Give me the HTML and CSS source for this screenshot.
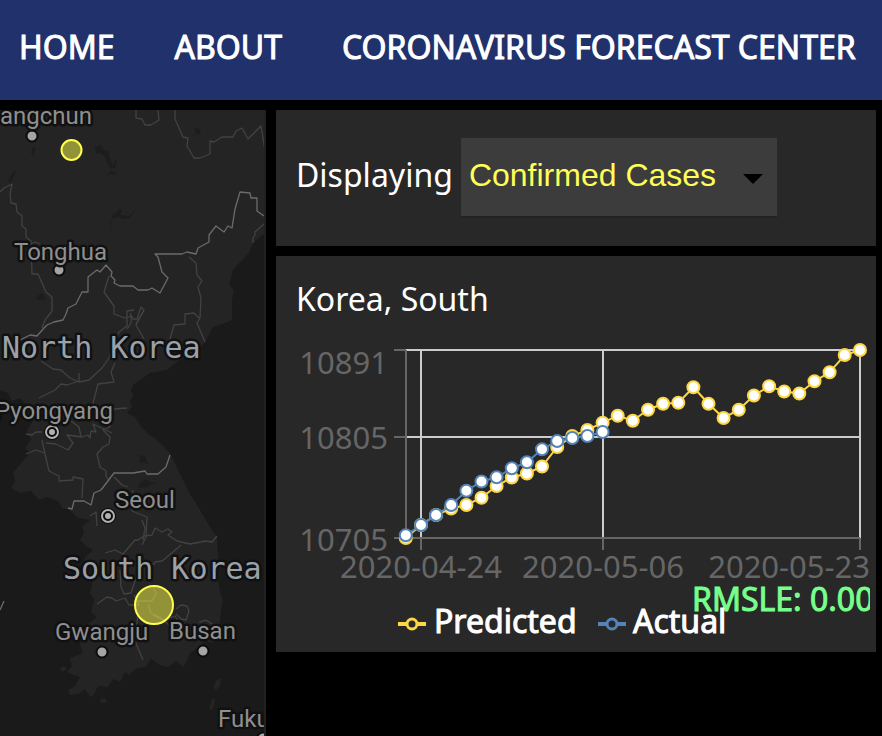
FILE: index.html
```html
<!DOCTYPE html>
<html lang="en">
<head>
<meta charset="utf-8">
<title>Coronavirus Forecast Center</title>
<link rel="stylesheet" href="styles.css">
</head>
<body>
<nav class="nav">
  <a href="#home">HOME</a>
  <a href="#about">ABOUT</a>
  <a href="#forecast">CORONAVIRUS FORECAST CENTER</a>
</nav>
<main class="layout">
  <section class="map" aria-label="Map">
    <svg class="map-canvas" role="img" aria-label="Map of the Korean peninsula">
      <g transform="translate(0 -110)">
        <path class="land" d="M0 110H264V234L260 237 253 243 249 253 241 261 233 270 229 285 234 290 232 300V320L225 323 213 327 205 342 198 350 187 357 178 361 167 370 150 373 133 385 131 391 134 395 130 400 132 407 127 413 135 417 140 425 148 434 155 438 170 453 176 466 183 480 190 494 200 510 210 527 217 537 218 558 217 570 218 580 220 592 223 600 221 611 220 620 219 630 213 643 205 641 199 647 190 653 187 661 183 667 176 661 168 667 160 665 151 659 146 667 137 668 129 675 125 672 120 682 113 679 108 687 98 686 94 695 90 697 85 689 79 694 70 695 68 690 75 686 80 677 74 675 67 672 72 666 70 658 83 653 80 645 83 633 88 624 97 617 91 612 94 600 90 593 93 580 88 575 97 567 83 563 86 556 93 550 86 546 80 540 84 533 82 526 90 520 78 518 70 510 62 508 58 501 47 497 39 500 31 491 20 493 11 488 15 481 13 473 22 462 30 453 25 448 31 440 27 430 33 421 38 410 28 407 20 398 12 401 8 393 0 390Z"/>
        <path class="land" d="M217 680l4-2-1 8-4 4-3-3zM212 698l3 2-2 9-4 1zM60 668l4-2 3 3-5 3zM100 699l5-1 2 4-6 1z"/>
        <path class="water" d="M95 147l6-2 3 5 5 1 0 5 4 9 5-8-3 11-4 1-4-6-2-6-5-4-4 1zM107 177l3-6 7 1-2 3-5-1zM111 233v-11l2-3-2-4 5-2 4-5 2 3-2 4 9 1 6-6-5 8-6 1-5-2-7 2-2 4zM192 138l4-6-2-5 7 3-2 5-3-2zM8 181l3-6 5-5-3 9-3 4zM31 153l2-6 3 1-3 8zM36 297l6-4 4 7-9 0zM139 455l6 1 3 8-5-2-4 1 1-6zM138 484l8-5 5 4 5-1-9 5-8 1z"/>
        <g class="district">
          <path d="M136 110l0 8 6 1 3 6h6l8-5-1-10"/>
          <path d="M175 110v9l8 18 5 1-1 8 7 12h6l10-4v-13l4 1 8-5h11l3-6 6-3 6 11 13-13 4 25"/>
          <path d="M0 192l4-4 8-4-2 10 1 9 5 1 1 8 5 4v10l4 3v8l5 4 1 33 6 0 8 18 6 5v14l-7 9-3 8"/>
          <path d="M31 244l4-2 5 2M109 276l-5 16 10 14v8l11 4 6-2 0 7-4 6M130 313l3 6h4l4-12 3 3-8 14"/>
          <path d="M189 257l7 6 1 12 5 6-4 6 3 11-1 20-3 5 8 19M199 318l-5-5-9 1v10l-11 1-5 17-6 5"/>
          <path d="M264 224l-9 8 0 3-2 3v5"/>
          <path d="M134 310l-7 1v15l-8 6-8 18-2 8-7 10-13 12-10 2-9-4-9-8-8-1-12-8M79 373v8l-12 4-6-1-6 6-16 8"/>
          <path d="M144 310l-8 15 8 14M115 363l-4 9 3 10-16 2-5 19 8 7M127 408l-13 1-4 6v12l-7 3 7 7-1 7-6 3-6 7 3 13 6 4v5l3 5"/>
          <path d="M26 434l6 1 4-3 6 0M42 440l3 14 4 17 10 5v5l14-1 0-3 10 2-1 19M26 454l10-4 9 3M46 443l10 1 12 6 5-7-6-8 15 2 6-2 2 3 1-7 5 1-3-8 19 9"/>
          <path d="M71 421l8 6 2 10M114 477l8 8 6 2M133 490l-1 21 15 6-1 20-4 8M142 520l3 8-2 12"/>
          <path d="M105 553l10-3 8 4 12-14h3l6-4 8-1 3-7 7 4 6-3 4 3-4 3 9 6 13 3 11-2 4-1 7 1 5-6M181 545l-8 7-11 9-7 1-1 2h-5M120 570l1 17 3 7 7-1 5-15"/>
          <path d="M97 604l10-7 5 1 4 3 9-3 4 7h10l-5-10M153 586l3 8-4 7h-15M148 605l3 8 10 5 9 8 8-5-3-5-12 4-10-5M138 613l-3 28 8 19M176 609l5-4 6 1 2 5-3 9-5-1-5-5M199 622l7-2 9 6M90 516l6-4 1 14"/>
        </g>
        <g class="border">
          <path d="M20 340l10-5 7 1 7-8 3-3 7-3 9-2 3-6 2-6 8-4 6-12h6l0-15 9-7 3 2 6-7 6 7-1 4 4 4-1 3 6 3h13l5 4h10l4-2 8 5 8-15-6-6-4-15-3-3h27l5-2 9 2 2-6 11-6v-7l7-9 8 6 4-6 4 2 3-19 5-17 10 1 1 5h6v13l7 5"/>
          <path d="M68 508l4 1 2-8h10l7 4 3-12 7-3 13-17h19l12-2 2 3h11l8-7 4-12"/>
          <path d="M0 610l4-9"/>
        </g>
        <circle class="case" cx="71.500" cy="150" r="10"/>
        <circle class="case" cx="154" cy="605" r="19"/>
        <g class="dots">
          <circle cx="32" cy="136" r="5.500"/><circle cx="59" cy="270" r="5.500"/>
          <circle cx="102" cy="652" r="5.500"/><circle cx="203" cy="651" r="5.500"/><circle cx="263" cy="738" r="5.500"/>
        </g>
        <g class="capitals">
          <circle class="halo" cx="52" cy="432" r="8"/><circle class="ring" cx="52" cy="432" r="6"/><circle class="core" cx="52" cy="432" r="3"/>
          <circle class="halo" cx="108" cy="516" r="8"/><circle class="ring" cx="108" cy="516" r="6"/><circle class="core" cx="108" cy="516" r="3"/>
        </g>
        <g class="city">
          <text x="0" y="124">angchun</text>
          <text x="14" y="260">Tonghua</text>
          <text x="-5" y="419">Pyongyang</text>
          <text x="115" y="508">Seoul</text>
          <text x="55" y="640">Gwangju</text>
          <text x="169" y="639">Busan</text>
          <text x="218" y="727">Fukuoka</text>
        </g>
        <g class="country">
          <text x="2" y="358">North Korea</text>
          <text x="63" y="579">South Korea</text>
        </g>
      </g>
    </svg>
  </section>
  <div class="side">
    <section class="card controls">
      <label for="metric">Displaying</label>
      <div class="select-wrap">
        <select id="metric"><option>Confirmed Cases</option><option>Deaths</option></select>
        <svg class="arrow" viewBox="0 0 20 10" aria-hidden="true"><path d="M0 0H20L10 10Z"/></svg>
      </div>
    </section>
    <section class="card forecast">
      <h2>Korea, South</h2>
      <svg class="chart" viewBox="296 320 574 332" role="img" aria-label="Predicted and actual confirmed cases">
        <defs>
          <marker id="dot-p" markerUnits="userSpaceOnUse" markerWidth="16" markerHeight="16" refX="8" refY="8"><circle class="point predicted" cx="8" cy="8" r="6"/></marker>
          <marker id="dot-a" markerUnits="userSpaceOnUse" markerWidth="16" markerHeight="16" refX="8" refY="8"><circle class="point actual" cx="8" cy="8" r="6"/></marker>
        </defs>
        <path class="grid" d="M406 350H860M406 437H860M421 350V538M603 350V538M860 350V538"/>
        <path class="axis" d="M406 350V538M394 350H406M394 437H406M394 538H860M421 538V550M603 538V550M860 538V550"/>
        <g class="tick end"><text x="388" y="374">10891</text><text x="388" y="449">10805</text><text x="388" y="551">10705</text><text x="870" y="578">2020-05-23</text></g>
        <g class="tick middle"><text x="421" y="578">2020-04-24</text><text x="603" y="578">2020-05-06</text></g>
        <polyline class="line predicted" marker-start="url(#dot-p)" marker-mid="url(#dot-p)" marker-end="url(#dot-p)" points="405.8,538 421,525 436.1,515 451.2,508.5 466.4,505 481.5,497.7 496.6,486 511.8,477.5 526.9,473.5 542,466.5 557.2,447 572.3,436 587.4,430 602.6,422.7 617.7,415.7 632.8,420.7 648,409.7 663.1,403.7 678.3,402.7 693.4,387.3 708.5,403.7 723.6,418 738.8,409.7 753.9,395.5 769.1,386.3 784.2,391.5 799.3,393.5 814.5,381.3 829.6,372.3 844.7,355 860,350"/>
        <polyline class="line actual" marker-start="url(#dot-a)" marker-mid="url(#dot-a)" marker-end="url(#dot-a)" points="405.8,535.3 421,525 436.1,515 451.2,505 466.4,490.7 481.5,481.5 496.6,477.3 511.8,468.3 526.9,462.3 542,449.3 557.2,441 572.3,438 587.4,436 602.6,432"/>
        <text class="strong rmsle" x="692" y="611">RMSLE: 0.0011</text>
        <g class="key predicted"><path d="M398 624H407M417 624H426"/><circle cx="412" cy="624" r="5"/></g>
        <g class="key actual"><path d="M598 624H607M617 624H626"/><circle cx="612" cy="624" r="5"/></g>
        <text class="strong" x="434" y="633">Predicted</text>
        <text class="strong" x="633" y="633">Actual</text>
      </svg>
    </section>
  </div>
</main>
</body>
</html>
```
FILE: styles.css
```css
* { box-sizing: border-box; }
body {
  margin: 0;
  min-height: 100vh;
  display: flex;
  flex-direction: column;
  background: #000;
  color: #fff;
  font: 32px/44px "Noto Sans", sans-serif;
}
.nav {
  display: flex;
  gap: 60px;
  padding: 25px 19px 31px;
  background: #20316b;
  white-space: nowrap;
}
.nav a {
  color: #fff;
  text-decoration: none;
  -webkit-text-stroke: 1px #fff;
}
.layout {
  flex: 1;
  display: grid;
  grid-template-columns: 133fr 300fr;
  gap: 10px;
  padding: 10px 6px 0 0;
}
.map {
  position: relative;
  min-width: 0;
  overflow: hidden;
  background: #1a1a1a;
  border-right: 2px solid #222;
}
.map-canvas {
  position: absolute;
  inset: 0;
  width: 100%;
  height: 100%;
}
.land { fill: #242424; }
.water { fill: #1d1d1d; }
.district, .border { fill: none; stroke-linejoin: round; }
.district { stroke: #424242; stroke-width: 1.3; }
.border { stroke: #6b6b6b; stroke-width: 1.3; }
.case { fill: #ffff4d; fill-opacity: .5; stroke: #ffff4d; stroke-width: 2; }
.dots circle { fill: #a5a5a5; stroke: #0b0b0b; stroke-width: 2; }
.halo { fill: #0b0b0b; }
.ring { fill: none; stroke: #b0b0b0; stroke-width: 2; }
.core { fill: #b0b0b0; }
.city text, .country text {
  paint-order: stroke;
  stroke: #111;
  stroke-width: 5px;
  stroke-linejoin: round;
}
.city text { font: 24px Roboto, sans-serif; fill: #8f8f8f; }
.country text { font: 30px "DejaVu Sans Mono", monospace; fill: #9ba1a8; }
.side {
  display: flex;
  flex-direction: column;
  gap: 10px;
  min-width: 0;
}
.card { background: #282828; }
.controls {
  display: flex;
  align-items: flex-start;
  gap: 8px;
  padding: 28px 20px 30px;
}
.controls label { padding-top: 15px; }
.select-wrap { position: relative; }
.select-wrap select {
  display: block;
  width: 316px;
  height: 78px;
  margin: 0;
  padding: 0 56px 4px 8px;
  appearance: none;
  border: 0;
  border-radius: 0;
  background: #3c3c3c;
  box-shadow: 0 2px #222;
  color: #ffff57;
  font: 32px "Liberation Sans", sans-serif;
}
.arrow {
  position: absolute;
  right: 14px;
  top: 36px;
  width: 20px;
  height: 10px;
  pointer-events: none;
}
.forecast { padding: 22px 6px 0 20px; }
h2 { margin: 0; font-size: 32px; font-weight: 400; line-height: 42px; }
.chart { display: block; width: 100%; overflow: hidden; }
.chart text { font-size: 32px; }
.grid { fill: none; stroke: #ccc; stroke-width: 2; }
.axis { fill: none; stroke: #666; stroke-width: 2; }
.chart .tick text { font-size: 31px; fill: #666; }
.end text { text-anchor: end; }
.middle text { text-anchor: middle; }
.predicted { stroke: #fdd643; }
.actual { stroke: #5384b8; }
.line { fill: none; stroke-width: 2; }
.point { fill: #fff; stroke-width: 2; }
.key { fill: none; stroke-width: 4; }
.key circle { stroke-width: 3; }
.strong { fill: #fff; stroke: #fff; stroke-width: 1px; }
.rmsle { fill: #76ff8b; stroke: #76ff8b; }
```
